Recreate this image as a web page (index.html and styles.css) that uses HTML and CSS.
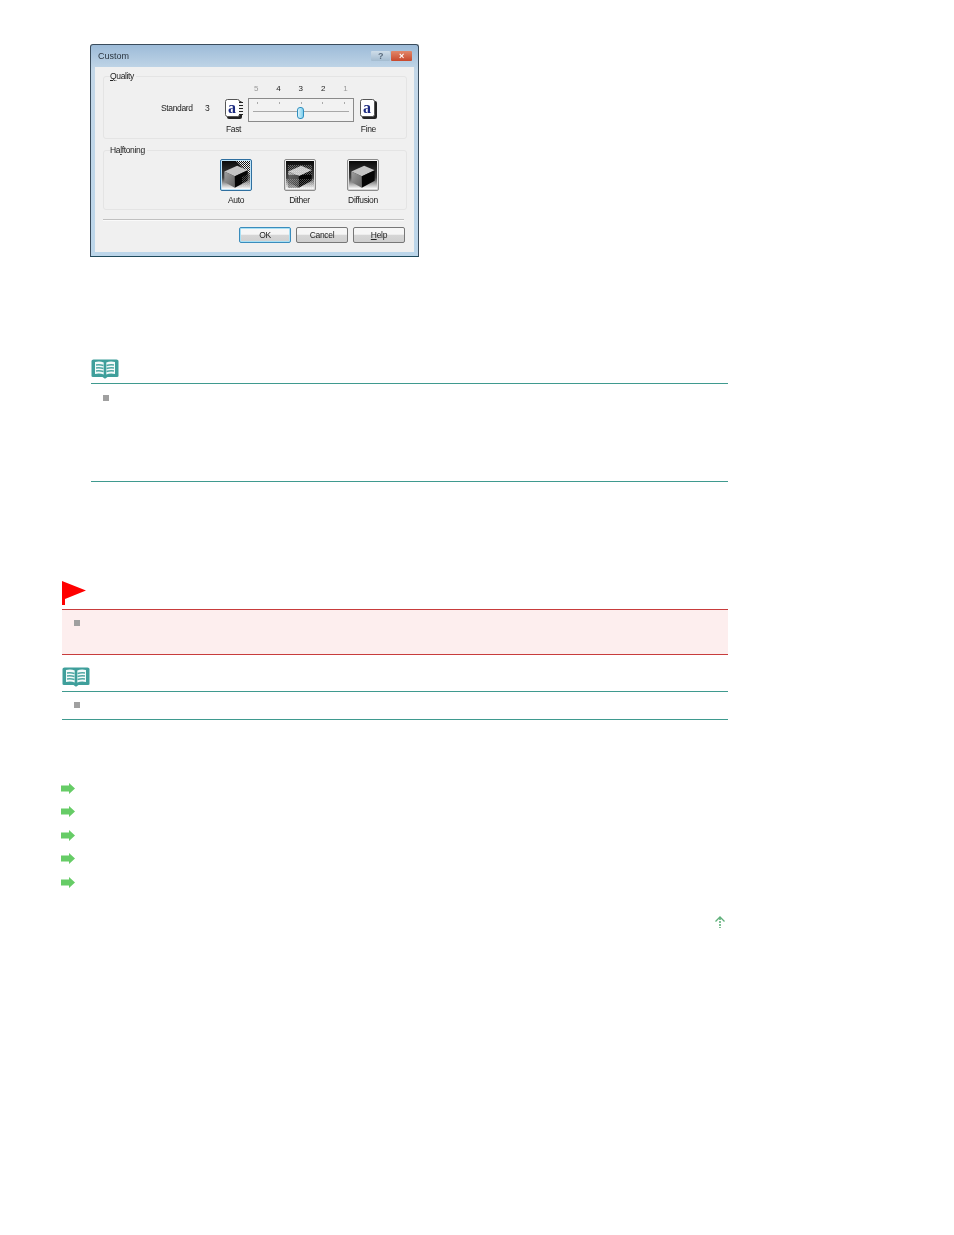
FILE: index.html
```html
<!DOCTYPE html>
<html lang="en">
<head>
    <meta charset="UTF-8">
    <title>Custom</title>
    <link rel="stylesheet" href="styles.css">
</head>
<body>
    <svg class="defs" width="0" height="0">
        <defs>
            <symbol id="book" viewBox="0 0 28 20">
                <path d="M0.500 2 Q0.500 0.500 2.500 0.500 H25.500 Q27.500 0.500 27.500 2 V17 Q27.500 18 26 18 H16.500 L14 19.800 L11.500 18 H2 Q0.500 18 0.500 17 Z" fill="#3f9f9b"/>
                <path d="M4 3 Q9 2 12.700 3.500 V15.500 Q9 14 4 15 Z M24 3 Q19 2 15.300 3.500 V15.500 Q19 14 24 15 Z" fill="#f4fbfa"/>
                <path d="M5 6 Q9 5.500 12.500 6.500 M5 9 Q9 8.500 12.500 9.500 M5 12 Q9 11.500 12.500 12.500 M23 6 Q19 5.500 15.500 6.500 M23 9 Q19 8.500 15.500 9.500 M23 12 Q19 11.500 15.500 12.500" fill="none" stroke="#4fa8a4" stroke-width="1.500"/>
            </symbol>
            <symbol id="go" viewBox="0 0 14 11">
                <path d="M0 2.500 H8 V0 L14 5.500 L8 11 V8.500 H0 Z" fill="#66cc66"/>
            </symbol>
            <linearGradient id="halftone" x1="0" y1="0" x2="0" y2="1">
                <stop offset="0" stop-color="#0a0a0a"/>
                <stop offset="0.6" stop-color="#444"/>
                <stop offset="1" stop-color="#fff"/>
            </linearGradient>
            <linearGradient id="cube-left" x1="0" y1="0" x2="1" y2="1">
                <stop offset="0" stop-color="#a0a0a0"/>
                <stop offset="1" stop-color="#606060"/>
            </linearGradient>
            <linearGradient id="noise-fade" x1="0" y1="0" x2="0" y2="1">
                <stop offset="0" stop-color="#fff"/>
                <stop offset="1" stop-color="#888"/>
            </linearGradient>
            <pattern id="dots" width="2" height="2" patternUnits="userSpaceOnUse">
                <rect width="1" height="1" fill="#fff"/>
                <rect x="1" y="1" width="1" height="1" fill="#ddd"/>
            </pattern>
            <symbol id="cube" viewBox="0 0 24 24">
                <path d="M2 9 L13 4 L22 8 L11 13 Z" fill="#c4c4c4"/>
                <path d="M2 9 L11 13 V23 L2 18 Z" fill="url(#cube-left)"/>
                <path d="M11 13 L22 8 V17 L11 23 Z" fill="#050505"/>
            </symbol>
            <symbol id="page" viewBox="0 0 18 21">
                <rect x="2" y="2" width="15" height="18" rx="2" fill="#222"/>
                <rect x="0.500" y="0.500" width="14" height="17" rx="2" fill="#fff" stroke="#555"/>
            </symbol>
        </defs>
    </svg>

    <div class="page">
        <div class="dialog">
            <div class="titlebar">
                <span class="dialog-title">Custom</span>
                <div class="window-btns">
                    <span class="win-btn win-help">?</span>
                    <span class="win-btn win-close">×</span>
                </div>
            </div>
            <div class="dialog-body">
                <fieldset class="group group-quality">
                    <legend><u>Q</u>uality</legend>
                    <div class="scale">
                        <span class="muted">5</span><span>4</span><span>3</span><span>2</span><span class="muted">1</span>
                    </div>
                    <div class="slider-row">
                        <span class="quality-name">Standard</span>
                        <span class="quality-value">3</span>
                        <div class="page-icon page-fast">
                            <svg width="18" height="21"><use href="#page"/></svg>
                            <span class="page-a">a</span>
                            <span class="page-teeth"></span>
                        </div>
                        <div class="slider">
                            <div class="ticks"><i></i><i></i><i></i><i></i><i></i></div>
                            <div class="track"></div>
                            <div class="thumb"></div>
                        </div>
                        <div class="page-icon page-fine">
                            <svg width="18" height="21"><use href="#page"/></svg>
                            <span class="page-a">a</span>
                        </div>
                    </div>
                    <div class="slider-ends">
                        <span>Fast</span>
                        <span>Fine</span>
                    </div>
                </fieldset>

                <fieldset class="group group-halftone">
                    <legend>Ha<u>l</u>ftoning</legend>
                    <div class="tones">
                        <div class="tone">
                            <div class="tone-btn tone-active">
                                <svg class="cube" width="28" height="28"><rect width="28" height="28" fill="url(#halftone)"/><path d="M14 0 H28 V14 Z" fill="url(#dots)"/><use href="#cube" width="28" height="28"/><path d="M20 16 L28 12 V24 L20 27 Z" fill="url(#dots)" opacity="0.3"/></svg>
                            </div>
                            <span>Auto</span>
                        </div>
                        <div class="tone">
                            <div class="tone-btn">
                                <svg class="cube" width="28" height="28"><rect width="28" height="28" fill="url(#halftone)"/><use href="#cube" width="28" height="28"/><rect x="2" y="4" width="24" height="10" fill="url(#dots)" opacity="0.35"/><rect x="2" y="14" width="11" height="13" fill="#000" opacity="0.35"/><rect x="0" y="18" width="28" height="10" fill="url(#dots)" opacity="0.3"/></svg>
                            </div>
                            <span>Dither</span>
                        </div>
                        <div class="tone">
                            <div class="tone-btn">
                                <svg class="cube" width="28" height="28"><rect width="28" height="28" fill="url(#halftone)"/><use href="#cube" width="28" height="28"/></svg>
                            </div>
                            <span>Diffusion</span>
                        </div>
                    </div>
                </fieldset>

                <div class="separator"></div>
                <div class="actions">
                    <button class="btn btn-default">OK</button>
                    <button class="btn">Cancel</button>
                    <button class="btn"><u>H</u>elp</button>
                </div>
            </div>
        </div>

        <div class="note note-nested">
            <div class="note-head"><svg width="28" height="20"><use href="#book"/></svg></div>
            <div class="note-body note-body-tall"><span class="bullet"></span></div>
        </div>

        <div class="caution">
            <div class="caution-head">
                <svg width="24" height="24" viewBox="0 0 24 24"><path d="M0 0 L24 9.500 L3 18 V24 H0 Z" fill="#ff0000"/></svg>
            </div>
            <div class="caution-body"><span class="bullet"></span></div>
        </div>

        <div class="note note-plain">
            <div class="note-head"><svg width="28" height="20"><use href="#book"/></svg></div>
            <div class="note-body"><span class="bullet"></span></div>
        </div>

        <div class="links">
            <div class="link-row"><svg width="14" height="11"><use href="#go"/></svg></div>
            <div class="link-row"><svg width="14" height="11"><use href="#go"/></svg></div>
            <div class="link-row"><svg width="14" height="11"><use href="#go"/></svg></div>
            <div class="link-row"><svg width="14" height="11"><use href="#go"/></svg></div>
            <div class="link-row"><svg width="14" height="11"><use href="#go"/></svg></div>
        </div>

        <div class="to-top">
            <svg width="10" height="12" viewBox="0 0 10 12"><path d="M0.500 5.500 L5 1 L9.500 5.500" fill="none" stroke="#5fb07a" stroke-width="1.300"/><path d="M5 2 V12" fill="none" stroke="#3f9f5f" stroke-width="1.300" stroke-dasharray="2 1"/></svg>
        </div>
    </div>
</body>
</html>
```

FILE: styles.css
```css
body {
    margin: 0;
    background: #fff;
    font-family: "Liberation Sans", Arial, sans-serif;
}

.defs {
    display: block;
    height: 0;
}

.page {
    width: 666px;
    padding: 44px 0 0 62px;
}

/* dialog, a scaled down capture in the original so it gets a slight blur */
.dialog {
    width: 329px;
    height: 213px;
    margin-left: 28px;
    box-sizing: border-box;
    border: 1px solid #3a4c5c;
    border-bottom-color: #1f4a5c;
    border-radius: 3px 3px 0 0;
    background: linear-gradient(#9dbbd8, #c3d7e8 12%, #bcd6ea);
    display: flex;
    flex-direction: column;
    font-size: 8.500px;
    letter-spacing: -0.350px;
    color: #222;
    filter: blur(0.45px);
}

.titlebar {
    height: 22px;
    display: flex;
    justify-content: space-between;
    padding: 6px 6px 0 7px;
    box-sizing: border-box;
}

.dialog-title {
    font-size: 9px;
    letter-spacing: 0;
    color: #2a3540;
    line-height: 11px;
}

.window-btns {
    display: flex;
    gap: 1px;
    height: 10px;
}

.win-btn {
    height: 10px;
    text-align: center;
    line-height: 10px;
    border-radius: 1px;
    font-size: 9px;
    font-weight: bold;
    color: #fff;
}

.win-help {
    width: 19px;
    background: linear-gradient(#cfdde9, #a3bbd0);
    color: #5a6c7e;
}

.win-close {
    width: 21px;
    background: linear-gradient(#e2886a, #c8482c);
}

.dialog-body {
    flex: 1;
    margin: 0 4px 4px;
    padding: 0 7px 0 8px;
    background: #f0f0f0;
    display: flex;
    flex-direction: column;
}

.group {
    margin: 0;
    padding: 0;
    min-width: 0;
    border: 1px solid #e4e4e4;
    border-radius: 3px;
}

.group legend {
    margin-left: 6px;
    padding: 0 2px 0 0;
    line-height: 10px;
}

.group-quality {
    height: 68px;
    margin-top: 4px;
    box-sizing: border-box;
}

.group-halftone {
    height: 65px;
    margin-top: 6px;
    box-sizing: border-box;
}

.scale {
    display: grid;
    grid-template-columns: repeat(5, 22.300px);
    margin: 2px 0 0 150px;
    height: 12px;
    line-height: 12px;
    font-size: 8px;
}

.scale .muted {
    color: #999;
}

.slider-row {
    display: flex;
    margin: 3px 0 0 57px;
    height: 24px;
    align-items: flex-start;
}

.quality-name {
    width: 44px;
    line-height: 20px;
}

.quality-value {
    width: 20px;
    line-height: 20px;
}

.page-icon {
    position: relative;
    width: 23px;
    height: 22px;
    margin-top: 1px;
}

.page-fine {
    margin-left: 6px;
}

.page-a {
    position: absolute;
    left: 3px;
    top: 0;
    font-family: "Liberation Serif", serif;
    font-weight: bold;
    font-size: 16px;
    line-height: 17px;
    letter-spacing: 0;
    color: #1c2a80;
}

.page-teeth {
    position: absolute;
    left: 14px;
    top: 3px;
    width: 4px;
    height: 13px;
    background: repeating-linear-gradient(#222 0 1px, #f0f0f0 1px 3px);
}

.slider {
    width: 106px;
    height: 24px;
    box-sizing: border-box;
    border: 1px solid #8a8a8a;
    background: #f2f2f2;
    position: relative;
}

.ticks {
    display: flex;
    justify-content: space-between;
    margin: 3px 8px 0;
}

.ticks i {
    width: 1px;
    height: 2px;
    background: #aaa;
}

.track {
    height: 1px;
    margin: 7px 4px 0;
    background: #a8a8a8;
}

.thumb {
    position: absolute;
    left: 48px;
    top: 8px;
    width: 7px;
    height: 12px;
    box-sizing: border-box;
    border: 1px solid #2f8fc0;
    border-radius: 3px;
    background: linear-gradient(90deg, #d8f2fb, #7fd0ee);
}

.slider-ends {
    display: flex;
    margin: 2px 0 0 122px;
    width: 150px;
    justify-content: space-between;
    line-height: 11px;
}

.tones {
    display: flex;
    margin: 4px 0 0 116px;
    gap: 31.500px;
}

.tone {
    width: 32px;
    display: flex;
    flex-direction: column;
    align-items: center;
}

.tone span {
    margin-top: 4px;
    line-height: 11px;
    white-space: nowrap;
}

.tone-btn {
    width: 32px;
    height: 32px;
    box-sizing: border-box;
    border: 1px solid #8c8c8c;
    border-radius: 2px;
    background: linear-gradient(#f4f4f4, #d4d4d4);
    display: flex;
    align-items: center;
    justify-content: center;
}

.tone-active {
    border-color: #2f6f9f;
    background: #bfe3f7;
}

.separator {
    height: 1px;
    margin: 9px 3px 0 0;
    background: #c0c0c0;
    border-bottom: 1px solid #fafafa;
}

.actions {
    display: flex;
    justify-content: flex-end;
    gap: 5px;
    margin: 6px 2px 0 0;
}

.btn {
    width: 52px;
    height: 16px;
    padding: 0;
    border: 1px solid #777;
    border-radius: 2px;
    background: linear-gradient(#f6f6f6 45%, #d6d6d6 50%, #cfcfcf);
    font-family: inherit;
    font-size: 8.500px;
    letter-spacing: -0.300px;
    color: #222;
}

.btn-default {
    border-color: #3a8cbc;
    box-shadow: inset 0 0 0 1px #a8e0f5;
}

/* note and caution boxes */
.note-head {
    height: 24px;
    border-bottom: 1px solid #3f9a8f;
}

.note-head svg {
    display: block;
}

.note-body {
    height: 17px;
    padding: 10px 0 0 12px;
    border-bottom: 1px solid #3f9a8f;
}

.note-body-tall {
    height: 86px;
    padding-top: 11px;
}

.note-nested {
    margin: 102px 0 0 29px;
}

.note-plain {
    margin-top: 12px;
}

.bullet {
    display: block;
    width: 6px;
    height: 6px;
    background: #a0a0a0;
}

.caution {
    margin-top: 99px;
}

.caution-head {
    height: 28px;
    border-bottom: 1px solid #c83c3c;
}

.caution-head svg {
    display: block;
}

.caution-body {
    height: 34px;
    padding: 10px 0 0 12px;
    background: #fdeeee;
    border-bottom: 1px solid #c83c3c;
}

/* related links */
.links {
    margin: 56.500px 0 0 -1px;
}

.link-row {
    height: 23.500px;
    display: flex;
    align-items: center;
}

.to-top {
    margin-top: 21.500px;
    padding-right: 3px;
    display: flex;
    justify-content: flex-end;
}
```
